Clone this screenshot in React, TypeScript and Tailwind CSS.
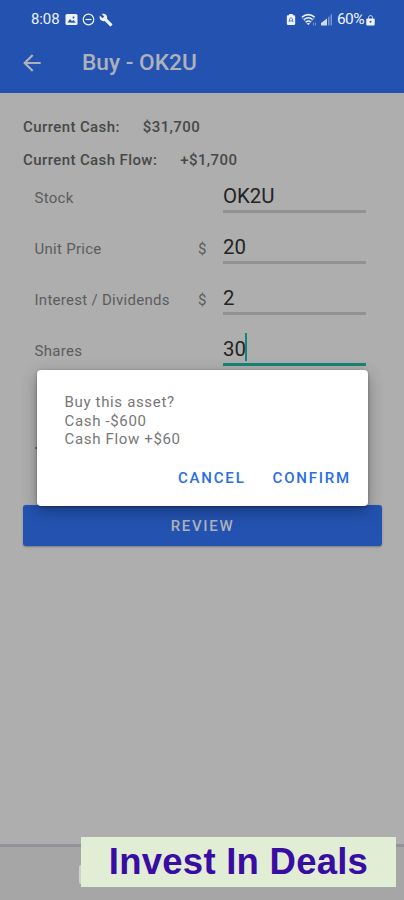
import clsx from "clsx";

interface FieldProps {
  label: string;
  value: string;
  prefix?: string;
  focused?: boolean;
}

const Field = ({ label, value, prefix, focused }: FieldProps) => {
  return (
    <div className="flex h-[51px] items-start pl-[34.5px]">
      <p className="w-[163.500px] pt-[18px] text-[15px] leading-5 tracking-[0.28px] text-[#5c5c5c]">
        {label}
      </p>
      <p className="w-[25px] pt-[18px] text-[15px] leading-5 text-[#5c5c5c]">
        {prefix}
      </p>
      <div
        className={clsx(
          "flex h-[43px] w-[143px] items-start border-b-[3px] pt-[12px]",
          focused ? "border-[#168577]" : "border-[#929292]"
        )}
      >
        <p className="pt-[2px] text-[20.4px] leading-6 text-[#242424]">{value}</p>
        {focused && <span className="-ml-px -mt-[2px] h-[28px] w-[2px] bg-[#168577]" />}
      </div>
    </div>
  );
};

const StatusBar = () => {
  return (
    <div className="flex h-[38px] items-center pt-px text-[#eef3ff]">
      <p className="ml-[31px] w-[34px] text-[15px] tracking-[-0.1px]">8:08</p>
      <svg className="h-[13px] w-[13px]" viewBox="0 0 13 13">
        <rect x="0.5" y="1" width="12" height="11" rx="1.5" fill="currentColor" />
        <path d="M2.5 9.5 5 6l2 2.3L8.5 7l2.3 2.7z" fill="#2352b0" />
        <circle cx="8.5" cy="4.4" r="1" fill="#2352b0" />
      </svg>
      <svg className="ml-[4px] h-[13px] w-[13px]" viewBox="0 0 13 13" fill="none" stroke="currentColor" strokeWidth="1.2">
        <circle cx="6.5" cy="6.5" r="5.3" />
        <path d="M3.5 6.5h6" />
      </svg>
      <svg className="ml-[4px] h-[14px] w-[14px]" viewBox="0 0 24 24" fill="currentColor">
        <path d="m22.7 19-9.1-9.1c.9-2.3.4-5-1.5-6.9-2-2-5-2.4-7.4-1.3L9 6 6 9 1.6 4.7C.4 7.1.9 10.1 2.9 12.1c1.9 1.9 4.6 2.4 6.9 1.5l9.1 9.1c.4.4 1 .4 1.4 0l2.3-2.3c.5-.4.5-1.1.1-1.4z" />
      </svg>
      <svg className="ml-[173px] h-[13px] w-[10px]" viewBox="0 0 10 14">
        <path d="M3 1h4v1.5h1.2Q9.5 2.5 9.5 4v7.5Q9.5 13 8 13H2Q.5 13 .5 11.5V4Q.5 2.5 1.8 2.5H3z" fill="currentColor" />
        <path d="M3 9.8 3.5 6.5 5 4.8l1.5 1.7.5 3.3M4 8.5h2" fill="none" stroke="#4670c0" />
      </svg>
      <svg className="ml-[5px] h-[14px] w-[16px]" viewBox="0 0 16 14" fill="none" stroke="currentColor">
        <path d="M1 4.2Q7.3-1 13.6 4.2M3 6.5q4.300-3.400 8.600 0M5 8.800q2.300-1.800 4.600 0" strokeWidth="1.5" />
        <path d="M1 4.5 7.3 12l6.3-7.5" strokeWidth="0.8" opacity="0.6" />
        <path d="m6 10 1.300 2 1.300-2z" fill="currentColor" stroke="none" />
        <path d="M12.5 9.5v3M14.5 9.5v3" opacity="0.4" />
      </svg>
      <svg className="ml-[4px] h-[13px] w-[12px]" viewBox="0 0 12 13" fill="currentColor">
        <path d="M0 12.5V10l6-4.5v7z" opacity="0.85" />
        <path d="M7 4.5 8.5 3v9.5H7zM9.5 2 11 .5v12H9.5z" opacity="0.42" />
      </svg>
      <p className="ml-[4px] w-[29px] whitespace-nowrap text-[15.5px] tracking-[-0.6px]">60%</p>
      <svg className="h-[13px] w-[9px]" viewBox="0 0 9 13">
        <path d="M2.5 6V4.5a2 2 0 0 1 4 0V6" fill="none" stroke="currentColor" opacity="0.75" />
        <rect x="0.3" y="5.5" width="8.4" height="7" rx="1" fill="currentColor" />
        <circle cx="4.5" cy="8.7" r="1" fill="#2352b0" />
      </svg>
    </div>
  );
};

const ConfirmDialog = () => {
  return (
    <div className="absolute left-[37px] top-[370px] flex h-[136px] w-[331px] flex-col justify-between rounded-[4px] bg-white pl-[27.5px] pr-[17px] pt-[23px] pb-[18px] shadow-[0_5px_16px_rgba(0,0,0,0.3),0_1px_3px_rgba(0,0,0,0.35)]">
      <div className="text-[15px] leading-[18.5px] tracking-[0.66px] text-[#777777]">
        <p>Buy this asset?</p>
        <p>Cash -$600</p>
        <p>Cash Flow +$60</p>
      </div>
      <div className="flex justify-end gap-[27px] text-[15px] font-medium leading-5 tracking-[1.8px] text-[#2a6ee5]">
        <button>CANCEL</button>
        <button>CONFIRM</button>
      </div>
    </div>
  );
};

export default function App() {
  return (
    <main className="relative flex h-[900px] w-[404px] flex-col overflow-hidden bg-[#aeaeae] font-['Roboto',sans-serif]">
      <header className="h-[93px] shrink-0 bg-[#2352b0]">
        <StatusBar />
        <div className="flex h-[49px] items-center text-[#aeb1b9]">
          <svg className="ml-[23px] h-[18px] w-[18px]" viewBox="0 0 18 18" fill="none" stroke="currentColor" strokeWidth="2.2">
            <path d="M17.7 9H2M9.7 1 1.7 9l8 8" />
          </svg>
          <h1 className="ml-[41px] text-[22.7px] font-medium leading-7">Buy - OK2U</h1>
        </div>
      </header>

      <section className="flex flex-col gap-[13px] pl-[23px] pt-[24px] text-[15px] font-medium leading-5 tracking-[0.4px] text-[#484848]">
        <div className="flex gap-[23px]">
          <p>Current Cash:</p>
          <p>$31,700</p>
        </div>
        <div className="flex gap-[23px]">
          <p>Current Cash Flow:</p>
          <p>+$1,700</p>
        </div>
      </section>

      <section className="flex flex-col">
        <Field label="Stock" value="OK2U" />
        <Field label="Unit Price" prefix="$" value="20" />
        <Field label="Interest / Dividends" prefix="$" value="2" />
        <Field label="Shares" value="30" focused />
      </section>

      <div className="ml-[35px] mt-[73px] h-[2px] w-[330px] bg-[#6f6f6f]" />
      <button className="ml-[23px] mr-[22px] mt-[56px] h-[41px] shrink-0 rounded-[3px] bg-[#2352b0] pt-px text-[15px] font-medium tracking-[1.7px] text-[#b0b3ba] shadow-[0_1px_2px_rgba(0,0,0,0.3)]">
        REVIEW
      </button>

      <footer className="mt-auto h-[56px] shrink-0 border-t-[3px] border-[#929298] bg-[#a6a6a6]" />

      <ConfirmDialog />

      <div className="absolute left-[79px] top-[865px] h-[19px] w-[4px] rounded-l-[2px] bg-[#cfd0d4]" />
      <div className="absolute left-[81px] top-[837px] flex h-[50px] w-[315px] items-center justify-center bg-[#e2edd6] pt-px font-['Liberation_Sans',sans-serif] text-[36.5px] font-bold tracking-[0.25px] text-[#390da3]">
        <span className="whitespace-nowrap">Invest In Deals</span>
      </div>
    </main>
  );
}
